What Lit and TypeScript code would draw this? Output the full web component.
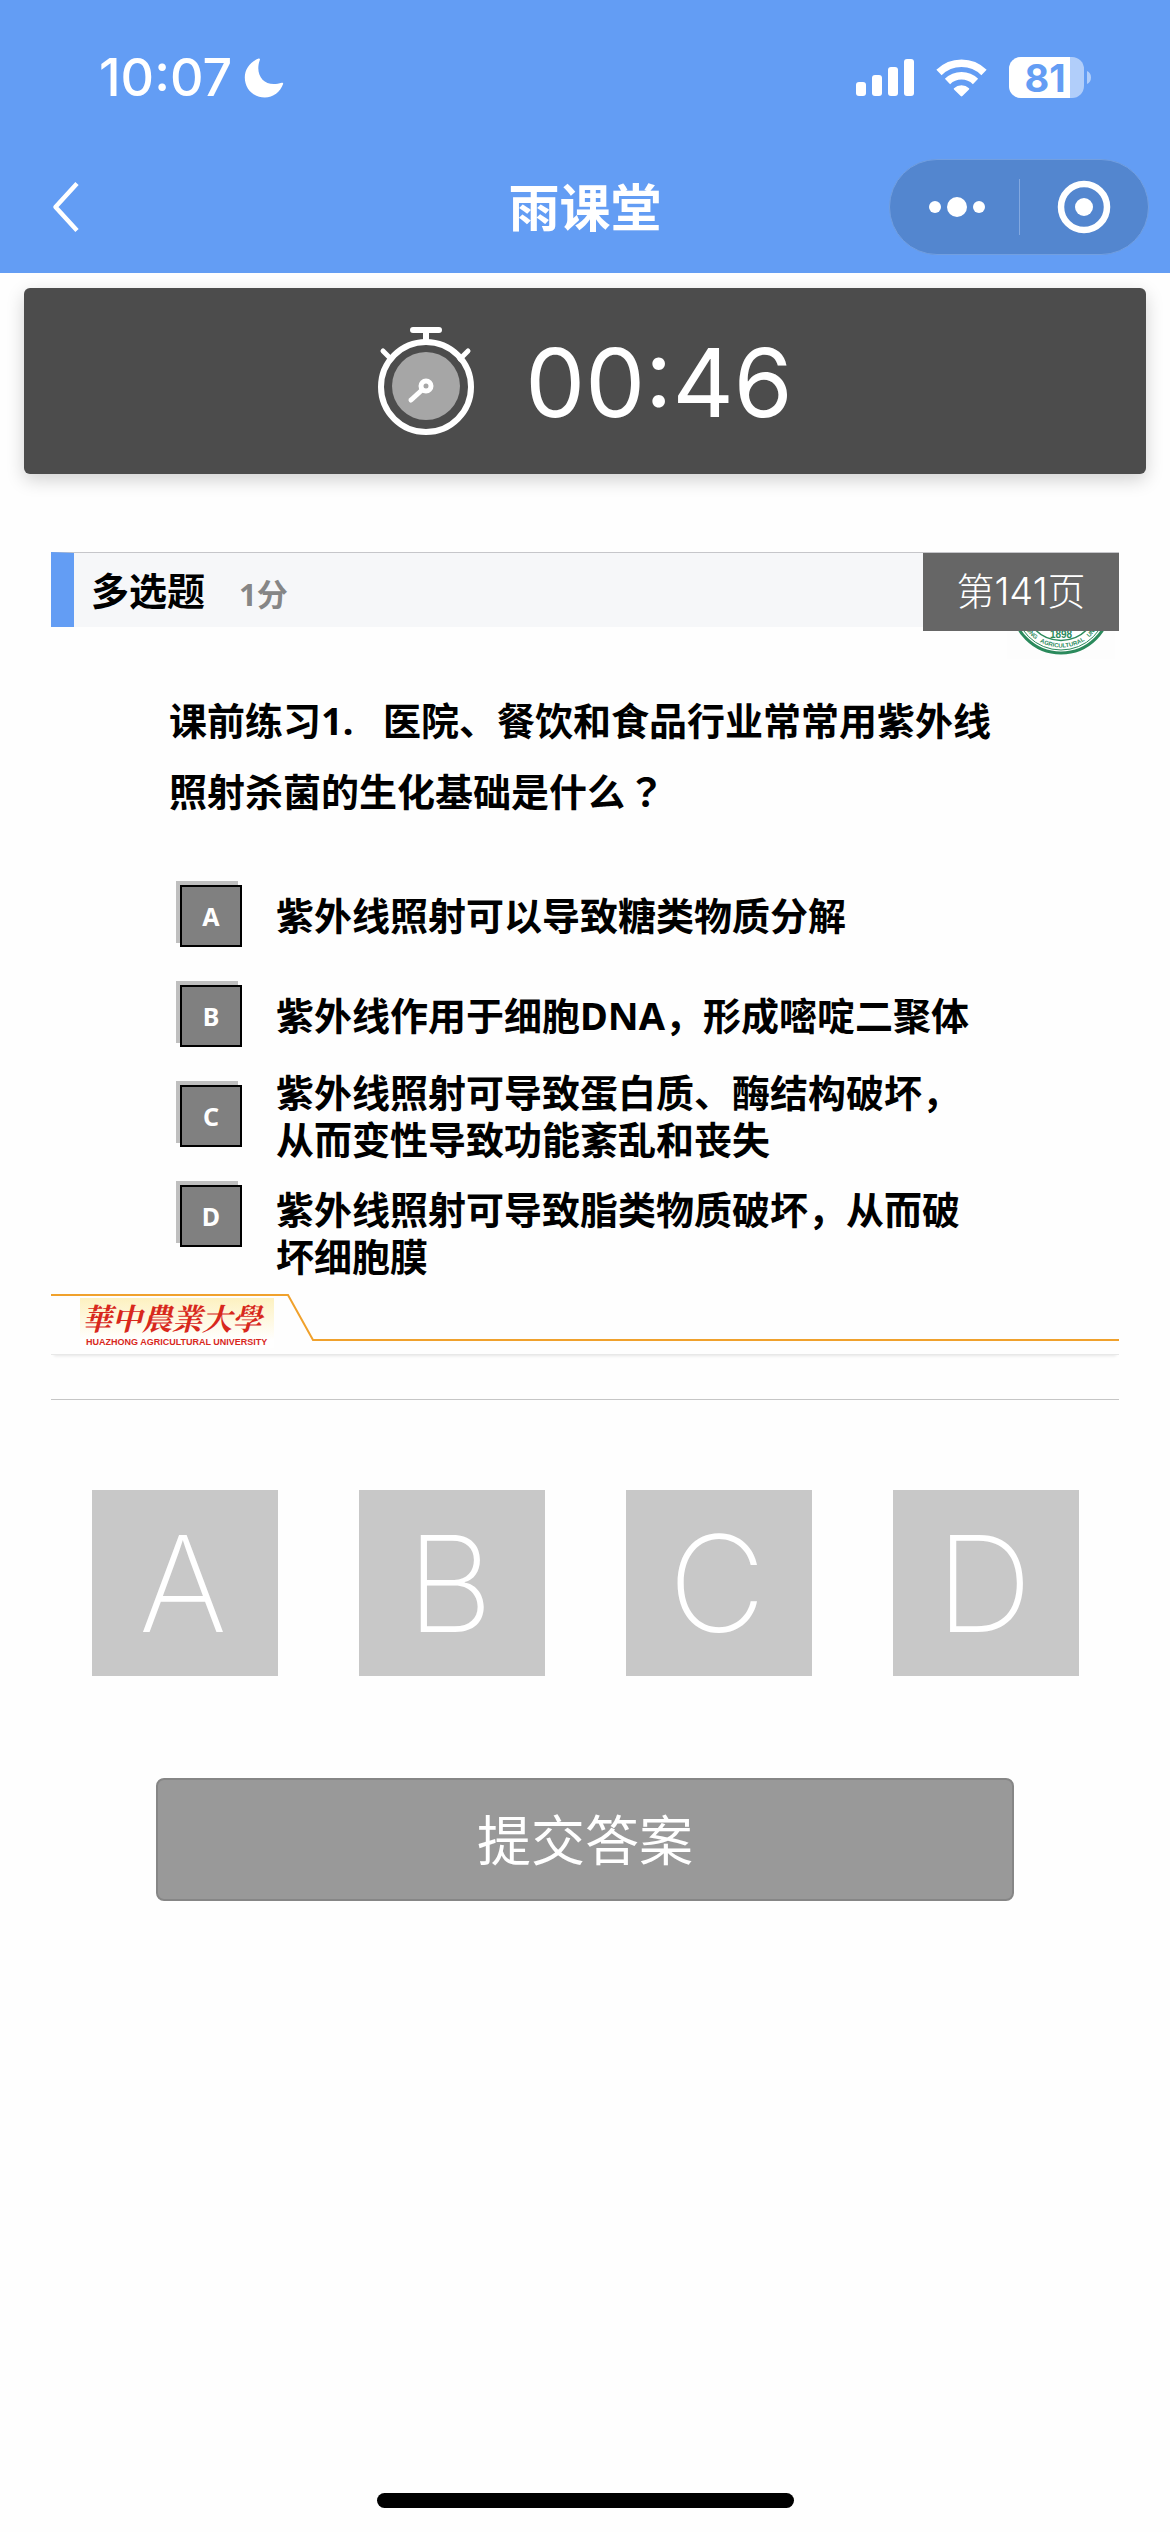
import { LitElement, html, css } from "lit";
import { customElement, property, state } from "lit/decorators.js";
import { classMap } from "lit/directives/class-map.js";

interface Choice {
  key: string;
  text: string;
  fit: "single" | "double" | "low";
}

const CHOICES: Choice[] = [
  { key: "A", text: "紫外线照射可以导致糖类物质分解", fit: "single" },
  { key: "B", text: "紫外线作用于细胞DNA，形成嘧啶二聚体", fit: "single" },
  { key: "C", text: "紫外线照射可导致蛋白质、酶结构破坏，从而变性导致功能紊乱和丧失", fit: "double" },
  { key: "D", text: "紫外线照射可导致脂类物质破坏，从而破坏细胞膜", fit: "low" },
];

@customElement("status-bar")
class StatusBar extends LitElement {
  static styles = css`
    :host {
      display: flex;
      align-items: center;
      justify-content: space-between;
      height: 156px;
      padding: 0 79px 0 99px;
      color: #fff;
      font-family: Inter, "Liberation Sans", sans-serif;
    }
    .group {
      display: flex;
      align-items: center;
    }
    .left {
      gap: 12px;
    }
    .right {
      gap: 22px;
    }
    .clock {
      font-size: 52px;
      font-weight: 500;
      line-height: 60px;
    }
    .level {
      font: 700 38px Inter, "Liberation Sans", sans-serif;
      fill: #639df4;
    }
    svg {
      display: block;
    }
  `;

  render() {
    return html`
      <div class="group left">
        <span class="clock">10:07</span>
        <svg width="40" height="40" viewBox="0 0 40 40" aria-hidden="true">
          <path
            fill="#fff"
            d="M14.6.6c.8-.4 1.6.2 1.3 1.1C14.8 4.6 14.3 7.4 14.3 10.2c0 9.2 6.3 15.9 15.5 15.9 2.7 0 5.2-.4 8-1.3.9-.3 1.6.5 1.3 1.3C36.3 34 29.3 39.5 20.8 39.5 9.5 39.5.8 30.9.8 19.5.8 11 6.3 3.9 14.6.6z"
          />
        </svg>
      </div>
      <div class="group right">
        <svg width="58" height="38" viewBox="0 0 58 38" fill="#fff" aria-hidden="true">
          <rect x="0" y="23" width="10" height="14" rx="3" />
          <rect x="16" y="16" width="10" height="21" rx="3" />
          <rect x="32" y="8" width="10" height="29" rx="3" />
          <rect x="48" y="0" width="10" height="37" rx="3" />
        </svg>
        <svg width="51" height="38" viewBox="0 0 51 38" aria-hidden="true">
          <g fill="none" stroke="#fff" stroke-width="7.5">
            <path d="M3 13.5A32 32 0 0 1 48 13.5" />
            <path d="M11.5 22.5A20 20 0 0 1 39.5 22.5" />
          </g>
          <path fill="#fff" d="M18 29.3a11 11 0 0 1 15 0c.4.4.4.7 0 1.1l-6.6 6.6c-.5.5-1.2.5-1.7 0L18 30.4c-.4-.4-.4-.7 0-1.1z" />
        </svg>
        <svg width="82" height="56" viewBox="0 -7 82 56" role="img" aria-label="81%">
          <defs>
            <clipPath id="charge"><rect width="61" height="42" /></clipPath>
          </defs>
          <rect width="75" height="41" rx="12" fill="#fff" fill-opacity=".5" />
          <rect width="75" height="41" rx="12" fill="#fff" clip-path="url(#charge)" />
          <path d="M78 14c2.5 1 4 3.5 4 6.5S80.5 26 78 27z" fill="#fff" fill-opacity=".5" />
          <text class="level" x="36" y="35" text-anchor="middle">81</text>
        </svg>
      </div>
    `;
  }
}

@customElement("nav-bar")
class NavBar extends LitElement {
  @property() heading = "";

  static styles = css`
    :host {
      display: grid;
      grid-template-columns: 1fr auto 1fr;
      align-items: center;
      height: 102px;
      padding: 0 21px 15px;
      color: #fff;
    }
    h1 {
      margin: 0;
      padding-bottom: 4px;
      font: 700 51px/72px "Noto Sans CJK SC", sans-serif;
    }
    button {
      display: flex;
      align-items: center;
      justify-content: center;
      padding: 0;
      border: 0;
      background: none;
      color: inherit;
    }
    .back {
      width: 90px;
      height: 72px;
    }
    .capsule {
      display: flex;
      align-items: center;
      justify-self: end;
      box-sizing: border-box;
      width: 260px;
      height: 96px;
      border: 1px solid #729fe0;
      border-radius: 48px;
      background: #5386cf;
    }
    .capsule button {
      flex: 1;
      height: 94px;
    }
    .divider {
      width: 1px;
      height: 56px;
      background: #82a8e0;
    }
    svg {
      display: block;
    }
  `;

  render() {
    return html`
      <button class="back" aria-label="返回">
        <svg width="28" height="52" viewBox="0 0 28 52" fill="none" stroke="#fff" stroke-width="4.5">
          <path d="M25 2.5 3.5 26 25 49.5" stroke-linejoin="round" />
        </svg>
      </button>
      <h1>${this.heading}</h1>
      <div class="capsule">
        <button aria-label="更多">
          <svg width="66" height="22" viewBox="-6 0 66 22" fill="#fff">
            <circle cx="8" cy="11" r="6" />
            <circle cx="30" cy="11" r="10" />
            <circle cx="52" cy="11" r="6" />
          </svg>
        </button>
        <span class="divider"></span>
        <button aria-label="关闭">
          <svg width="54" height="54" viewBox="0 0 54 54">
            <circle cx="27" cy="27" r="23" fill="none" stroke="#fff" stroke-width="6.5" />
            <circle cx="27" cy="27" r="9" fill="#fff" />
          </svg>
        </button>
      </div>
    `;
  }
}

@customElement("countdown-card")
class CountdownCard extends LitElement {
  @property() remaining = "";

  static styles = css`
    :host {
      display: flex;
      align-items: center;
      justify-content: center;
      gap: 50px;
      height: 186px;
      margin: 15px 24px 0;
      border-radius: 6px;
      background: #4c4c4c;
      box-shadow: 0 6px 18px rgba(0, 0, 0, 0.18);
      color: #fff;
    }
    .time {
      padding-top: 4px;
      font: 400 95px/120px Inter, "Liberation Sans", sans-serif;
    }
    svg {
      display: block;
    }
  `;

  render() {
    return html`
      <svg width="98" height="110" viewBox="0 0 98 110" aria-hidden="true">
        <g fill="none" stroke="#fff" stroke-width="6" stroke-linecap="round">
          <circle cx="49" cy="61" r="45" />
          <path d="M36 4h26M49 4v12" />
          <path d="M6 25l8 8M91 25l-8 8" stroke-width="5" />
        </g>
        <circle cx="49" cy="60" r="34" fill="#a6a6a6" />
        <g fill="none" stroke="#fff" stroke-width="5" stroke-linecap="round">
          <circle cx="49" cy="60" r="5" />
          <path d="M45 64 34 74" />
        </g>
      </svg>
      <span class="time" role="timer">${this.remaining}</span>
    `;
  }
}

@customElement("quiz-slide")
class QuizSlide extends LitElement {
  static styles = css`
    :host {
      display: block;
      position: relative;
      margin: 78px 51px 0;
      font-family: "Noto Sans", "Noto Sans CJK SC", sans-serif;
      color: #000;
    }
    .bar {
      display: flex;
      align-items: center;
      height: 74px;
      padding-left: 17px;
      border-top: 1px solid #c6c6ca;
      border-left: 23px solid #639df4;
      background: #f6f7f9;
    }
    h2 {
      margin: 0;
      font-size: 38px;
      font-weight: 700;
      line-height: 74px;
    }
    .score {
      padding: 8px 0 0 34px;
      font-size: 31px;
      font-weight: 700;
      line-height: 40px;
      color: #868686;
    }
    .page {
      display: flex;
      align-items: center;
      justify-content: center;
      position: absolute;
      top: 1px;
      right: 0;
      box-sizing: border-box;
      width: 196px;
      height: 78px;
      padding-bottom: 2px;
      background: #666;
      color: #fff;
      font: 300 38px/48px Inter, "Noto Sans CJK SC", sans-serif;
    }
    .seal {
      position: absolute;
      top: 1px;
      right: 4px;
    }
    .seal-ring {
      font: 700 6px "Liberation Sans", sans-serif;
      fill: #2b8a5c;
    }
    .seal-year {
      font: 700 10px "Liberation Sans", sans-serif;
      fill: #2b8a5c;
    }
    .question {
      max-width: 840px;
      margin: 58px 0 0 118px;
      font-size: 38px;
      font-weight: 700;
      line-height: 70px;
    }
    .centered-mark {
      font-family: "Noto Sans CJK TC", sans-serif;
      margin-left: 2px;
    }
    .choices {
      display: grid;
      grid-auto-rows: minmax(100px, auto);
      margin: 40px 0 0 125px;
      padding: 0;
      list-style: none;
    }
    .choice {
      display: flex;
      align-items: flex-start;
      gap: 34px;
    }
    .badge {
      flex: none;
      box-sizing: border-box;
      width: 62px;
      height: 62px;
      margin: 19px 0 0 4px;
      border: 2px solid #000;
      background: #808080;
      box-shadow: -4px -4px 0 #bfbfbf;
      color: #fff;
      font-size: 25px;
      font-weight: 700;
      line-height: 58px;
      text-align: center;
    }
    .text {
      max-width: 710px;
      font-size: 38px;
      font-weight: 700;
      line-height: 47px;
    }
    .single {
      padding-top: 26px;
    }
    .double {
      padding-top: 3px;
    }
    .low {
      padding-top: 20px;
    }
    .footer {
      display: flex;
      position: relative;
      height: 60px;
      margin-top: 14px;
      border-bottom: 1px solid #e8e8e8;
      box-shadow: 0 4px 3px -3px rgba(0, 0, 0, 0.1);
    }
    .rule {
      flex: 1;
      height: 45px;
      border-bottom: 2px solid #f0a12c;
    }
    .brand {
      position: absolute;
      top: 4px;
      left: 29px;
      width: 194px;
      background: linear-gradient(#fdf1c0, #fff 42px);
      color: #d8281c;
    }
    .brand-zh {
      padding-left: 2px;
      font: italic 700 30px/38px "Noto Serif CJK TC", "Noto Sans CJK TC", serif;
      white-space: nowrap;
    }
    .brand-en {
      padding-left: 6px;
      font: 700 9px/12px "Liberation Sans", sans-serif;
      white-space: nowrap;
    }
    svg {
      display: block;
    }
  `;

  render() {
    return html`
      <div class="bar">
        <h2>多选题</h2>
        <span class="score">1分</span>
      </div>
      <svg class="seal" width="108" height="106" viewBox="0 0 108 106" aria-hidden="true">
        <rect width="108" height="106" fill="#fdfdfd" />
        <g fill="none" stroke="#2b8a5c">
          <circle cx="54" cy="51" r="49" fill="#fff" stroke-width="3" />
          <circle cx="54" cy="51" r="46" stroke-width="1" />
          <circle cx="54" cy="51" r="36.5" stroke-width="1.5" />
        </g>
        <defs><path id="ring" d="M10.5 51a43.5 43.5 0 0 0 87 0" /></defs>
        <text class="seal-ring" text-anchor="middle">
          <textPath href="#ring" startOffset="50%">ZHONG&nbsp;&nbsp; AGRICULTURAL&nbsp;&nbsp; UNIVE</textPath>
        </text>
        <text class="seal-year" x="54" y="85" text-anchor="middle">1898</text>
      </svg>
      <span class="page">第141页</span>

      <div class="question">课前练习1.&nbsp;&nbsp; 医院、餐饮和食品行业常常用紫外线照射杀菌的生化基础是什么<span class="centered-mark">？</span></div>

      <ol class="choices">
        ${CHOICES.map(
          (c) => html`
            <li class="choice">
              <span class="badge">${c.key}</span>
              <span class=${classMap({ text: true, [c.fit]: true })}>${c.text}</span>
            </li>
          `
        )}
      </ol>

      <div class="footer">
        <svg width="263" height="60" viewBox="0 0 263 60" fill="none" stroke="#f0a12c" stroke-width="2" aria-hidden="true">
          <path d="M0 1h237l25 45h2" />
        </svg>
        <div class="rule"></div>
        <div class="brand">
          <div class="brand-zh">華中農業大學</div>
          <div class="brand-en">HUAZHONG AGRICULTURAL UNIVERSITY</div>
        </div>
      </div>
    `;
  }
}

@customElement("app-root")
class AppRoot extends LitElement {
  @state() private picked = new Set<string>();

  static styles = css`
    :host {
      display: flex;
      flex-direction: column;
      min-height: 100vh;
      background: #fefefe;
    }
    header {
      background: #639df4;
    }
    main {
      flex: 1;
    }
    .answers {
      display: grid;
      grid-template-columns: repeat(4, 1fr);
      justify-items: center;
      margin: 44px 51px 0;
      padding-top: 90px;
      border-top: 1px solid #c6c6c6;
    }
    .answer {
      width: 186px;
      height: 186px;
      padding: 0 3px 0 0;
      border: 0;
      background: #c8c8c8;
      color: #fff;
      font: 200 134px/186px Inter, "Liberation Sans", sans-serif;
    }
    .picked {
      background: #639df4;
    }
    .actions {
      display: flex;
      margin: 102px 156px 0;
    }
    .submit {
      flex: 1;
      height: 123px;
      padding: 0 0 4px;
      border: 2px solid #868686;
      border-radius: 8px;
      background: #999;
      color: #fff;
      font: 400 54px/80px "Noto Sans CJK SC", sans-serif;
    }
    .home {
      width: 417px;
      height: 15px;
      margin: 0 auto 24px;
      border-radius: 8px;
      background: #000;
    }
  `;

  private toggle(key: string) {
    const next = new Set(this.picked);
    if (!next.delete(key)) next.add(key);
    this.picked = next;
  }

  render() {
    return html`
      <header>
        <status-bar></status-bar>
        <nav-bar heading="雨课堂"></nav-bar>
      </header>
      <main>
        <countdown-card remaining="00:46"></countdown-card>
        <quiz-slide></quiz-slide>
        <div class="answers">
          ${CHOICES.map(
            ({ key }) => html`
              <button
                class=${classMap({ answer: true, picked: this.picked.has(key) })}
                aria-pressed=${this.picked.has(key) ? "true" : "false"}
                @click=${() => this.toggle(key)}
              >${key}</button>
            `
          )}
        </div>
        <div class="actions"><button class="submit">提交答案</button></div>
      </main>
      <div class="home"></div>
    `;
  }
}
